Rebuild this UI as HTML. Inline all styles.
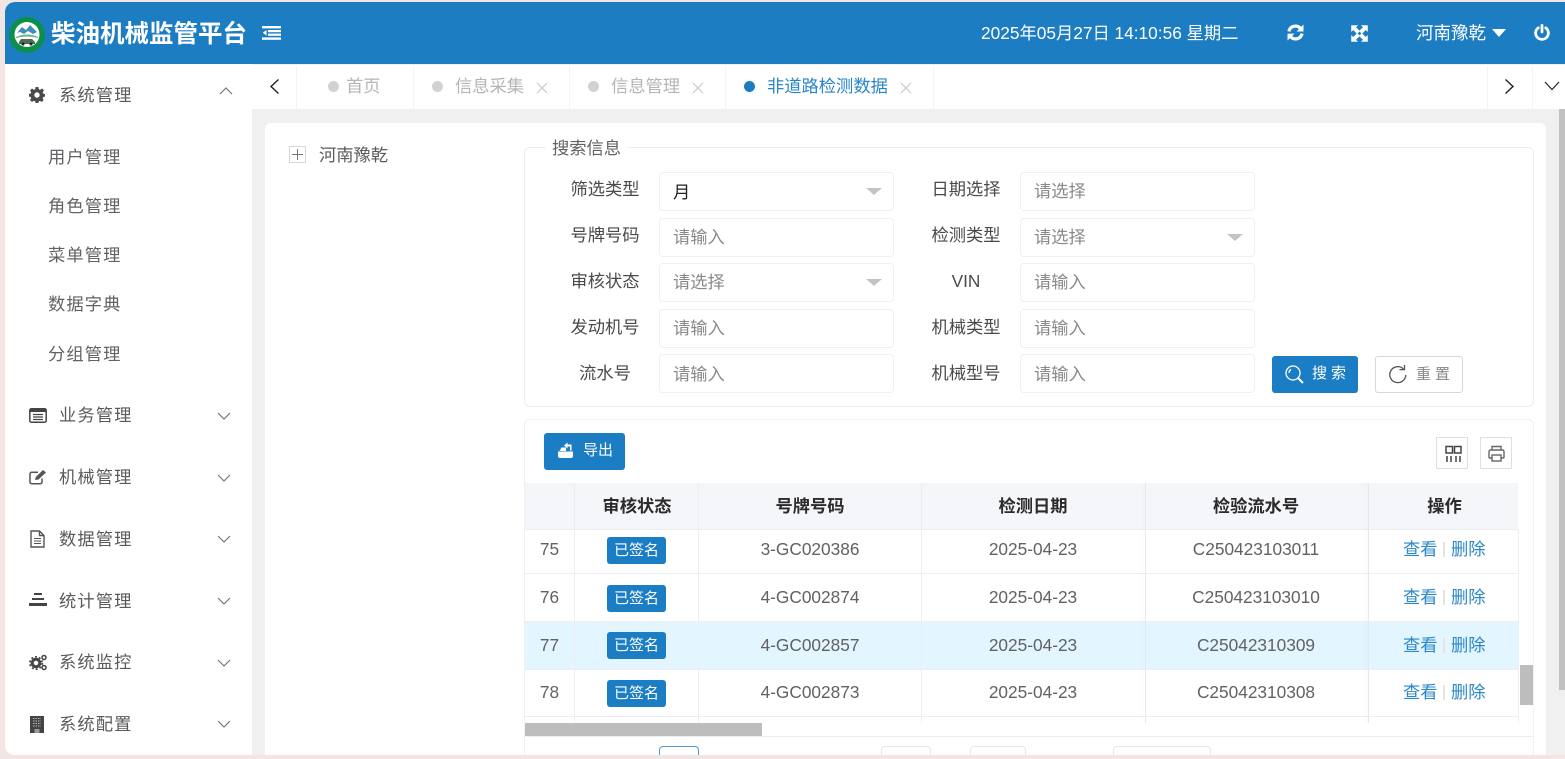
<!DOCTYPE html>
<html lang="zh"><head><meta charset="utf-8"><title>柴油机械监管平台</title>
<style>
*{box-sizing:border-box}
html,body{margin:0;padding:0;width:1565px;height:759px;overflow:hidden;background:#f3e5e3;font-family:"Liberation Sans","Noto Sans CJK SC",sans-serif;color:#606266}
.a{position:absolute}
.t{position:absolute;white-space:nowrap;line-height:20px}
#win{position:absolute;left:5px;top:2px;width:1560px;height:753px;background:#f0f0f0;border-radius:10px 0 0 10px;overflow:hidden}
#page{position:absolute;left:0;top:0;width:1565px;height:759px;overflow:hidden}
.menu{position:absolute;left:59px;font-size:17.28px;letter-spacing:1.1px;color:#5a5a5a;white-space:nowrap;line-height:20px}
.sub{position:absolute;left:48px;font-size:17.28px;letter-spacing:1.1px;color:#606266;white-space:nowrap;line-height:20px}
.lab{position:absolute;margin-top:-1px;font-size:17.28px;color:#4a4a4a;text-align:center;width:90px;line-height:20px;white-space:nowrap}
.inp{position:absolute;width:235px;height:39px;border:1px solid #edf0f5;border-radius:4px;background:#fff;font-size:17.28px;color:#8a8a8a;padding-left:13px;line-height:36px}
.caret{position:absolute;right:11px;top:15px;width:0;height:0;border-left:8px solid transparent;border-right:8px solid transparent;border-top:7px solid #c4c4c4}
.c{position:absolute;text-align:center;font-size:17.28px;color:#606266;white-space:nowrap}
.tag{position:absolute;left:607px;width:59px;height:27px;background:#1b7dc4;border-radius:3px;color:#fff;font-size:15px;text-align:center;line-height:27px}
.v{position:absolute;background:#eceef4;width:1px}
.h{position:absolute;background:#eceef4;height:1px}
.lnk{position:absolute;font-size:17.28px;color:#2a88c9;white-space:nowrap;line-height:20px}
.dot{position:absolute;width:11px;height:11px;border-radius:50%;background:#d2d2d2}
.tab{position:absolute;font-size:17.28px;color:#b5b5b5;white-space:nowrap;line-height:20px}
.ticon{position:absolute;width:1px;background:#f3f4f7;top:66px;height:43px}
</style></head><body>
<div id="win"></div>
<div id="page">
<!-- header -->
<div class="a" style="left:5px;top:2px;width:1560px;height:62px;background:#1c7dc3;border-radius:10px 0 0 0"></div>
<svg class="a" style="left:9px;top:17px" width="36" height="36" viewBox="0 0 36 36">
<circle cx="18" cy="18" r="18" fill="#0c8f4b"/><circle cx="18" cy="17.5" r="12.5" fill="#fff"/>
<path d="M8 16 L13 10 L17 13 L21 8 L28 15 L24 17 L19 14 L15 17 L11 15Z" fill="#3f8fb8"/>
<path d="M7 20 Q18 15 29 20 L29 21 Q18 18 7 21Z" fill="#69b48a"/>
<path d="M10 25 L12 22 H23 L26 25 V27 H10Z" fill="#4f6b55"/><circle cx="14" cy="27" r="1.5" fill="#222"/><circle cx="22" cy="27" r="1.5" fill="#222"/>
</svg>
<div class="t" style="left:51px;top:18px;font-size:24.5px;font-weight:700;color:#fff;line-height:34px">柴油机械监管平台</div>
<svg class="a" style="left:262px;top:26px" width="19" height="14" viewBox="0 0 19 14" fill="#fff"><rect x="0" y="0" width="19" height="2.4"/><rect x="6" y="4" width="13" height="2.2"/><rect x="6" y="7.6" width="13" height="2.2"/><rect x="0" y="11.4" width="19" height="2.4"/><path d="M4.5 4 L0.8 6.8 L4.5 9.6Z"/></svg>
<div class="t" style="left:981px;top:23px;font-size:17.3px;color:#fff">2025年05月27日 14:10:56 星期二</div>
<svg class="a" style="left:1287px;top:24px" width="17" height="17" viewBox="0 0 16 16" fill="none" stroke="#fff" stroke-width="3"><path d="M1.8 7 A6.3 6.3 0 0 1 12.6 4"/><path d="M14.2 9 A6.3 6.3 0 0 1 3.4 12"/><path d="M15.5 .5 V7 H9Z" fill="#fff" stroke="none"/><path d="M.5 15.5 V9 H7Z" fill="#fff" stroke="none"/></svg>
<svg class="a" style="left:1351px;top:25px" width="17" height="17" viewBox="0 0 15 15" fill="#fff" stroke="#fff" stroke-width=".6"><path d="M.5 .5H5.5L4 2 7.5 5.4 5.4 7.5 2 4 .5 5.5Z"/><path d="M14.5 .5V5.5L13 4 9.6 7.5 7.5 5.4 11 2 9.5 .5Z"/><path d="M.5 14.5V9.5L2 11 5.4 7.5 7.5 9.6 4 13 5.5 14.5Z"/><path d="M14.5 14.5H9.5L11 13 7.5 9.6 9.6 7.5 13 11 14.5 9.5Z"/></svg>
<div class="t" style="left:1416px;top:23px;font-size:17.5px;color:#fff">河南豫乾</div>
<div class="a" style="left:1492px;top:29px;width:0;height:0;border-left:7.5px solid transparent;border-right:7.5px solid transparent;border-top:8px solid #fff"></div>
<svg class="a" style="left:1534px;top:24px" width="16" height="17" viewBox="0 0 15 16" fill="none" stroke="#fff" stroke-width="2.6" stroke-linecap="round"><path d="M4 3.6 A6 6 0 1 0 11 3.6"/><path d="M7.5 1.3 V7.5"/></svg>

<!-- sidebar -->
<div class="a" style="left:5px;top:64px;width:247px;height:691px;background:#fff;border-radius:0 0 0 10px"></div>
<svg class="a" style="left:29px;top:87px" width="16" height="16" viewBox="0 0 16 16"><path fill="#4a4a4a" fill-rule="evenodd" d="M6.6 0H9.4L9.8 2.2 11.2 2.8 13.1 1.5 15 3.4 13.7 5.3 14.3 6.7 16 7V9.6L14.3 10 13.7 11.4 14.6 13.2 12.8 15 11 13.9 9.8 14.4 9.4 16H6.6L6.2 14.4 4.8 13.8 3 15 1 13.1 2.2 11.3 1.7 10 0 9.6V6.9L1.7 6.5 2.2 5.2 1 3.4 3 1.5 4.8 2.7 6.2 2.2ZM8 5.3A2.7 2.7 0 1 0 8 10.7 2.7 2.7 0 1 0 8 5.3Z"/></svg>
<div class="menu" style="top:85px">系统管理</div>
<svg class="a" style="left:219px;top:86px" width="14" height="9" fill="none" stroke="#777" stroke-width="1.2"><path d="M1 8 L7 2 L13 8"/></svg>
<div class="sub" style="top:147px">用户管理</div>
<div class="sub" style="top:196px">角色管理</div>
<div class="sub" style="top:245px">菜单管理</div>
<div class="sub" style="top:294px">数据字典</div>
<div class="sub" style="top:344px">分组管理</div>

<svg class="a" style="left:29px;top:408px" width="18" height="15" viewBox="0 0 18 15"><rect x=".8" y=".8" width="16.4" height="13.4" rx="1.5" fill="#fff" stroke="#444" stroke-width="1.5"/><rect x="1" y="1" width="16" height="3" fill="#444"/><path d="M4 6.5H14M4 9H14M4 11.5H14" stroke="#444" stroke-width="1.2"/></svg>
<div class="menu" style="top:405px">业务管理</div>
<svg class="a" style="left:217px;top:412px" width="14" height="9" fill="none" stroke="#777" stroke-width="1.2"><path d="M1 1 L7 7 L13 1"/></svg>

<svg class="a" style="left:29px;top:469px" width="18" height="16" viewBox="0 0 18 16" fill="none"><path d="M13 9.5V13A1.7 1.7 0 0 1 11.3 14.7H2.7A1.7 1.7 0 0 1 1 13V5A1.7 1.7 0 0 1 2.7 3.3H9" stroke="#555" stroke-width="1.5"/><path d="M6 11 L6.8 8 L14 1 L17 3.5 L9.5 10.5Z" fill="#555"/></svg>
<div class="menu" style="top:467px">机械管理</div>
<svg class="a" style="left:217px;top:474px" width="14" height="9" fill="none" stroke="#777" stroke-width="1.2"><path d="M1 1 L7 7 L13 1"/></svg>

<svg class="a" style="left:30px;top:530px" width="15" height="18" viewBox="0 0 15 18" fill="none" stroke="#555" stroke-width="1.4"><path d="M1 1H9.5L14 5.5V17H1Z"/><path d="M9.5 1V5.5H14"/><path d="M4 8.5H11M4 11H11M4 13.5H11" stroke-width="1.1"/></svg>
<div class="menu" style="top:529px">数据管理</div>
<svg class="a" style="left:217px;top:535px" width="14" height="9" fill="none" stroke="#777" stroke-width="1.2"><path d="M1 1 L7 7 L13 1"/></svg>

<svg class="a" style="left:29px;top:593px" width="18" height="15" viewBox="0 0 18 15" fill="#444"><rect x="5" y="0" width="8" height="2"/><rect x="3" y="5" width="12" height="2"/><rect x="0" y="10" width="18" height="3"/></svg>
<div class="menu" style="top:591px">统计管理</div>
<svg class="a" style="left:217px;top:597px" width="14" height="9" fill="none" stroke="#777" stroke-width="1.2"><path d="M1 1 L7 7 L13 1"/></svg>

<svg class="a" style="left:29px;top:654px" width="19" height="17" viewBox="0 0 19 17" fill="none"><circle cx="7" cy="9" r="3.8" stroke="#444" stroke-width="3"/><circle cx="7" cy="9" r="6.2" stroke="#444" stroke-width="1.6" stroke-dasharray="2 2"/><circle cx="15" cy="3.5" r="2" stroke="#444" stroke-width="1.5"/><circle cx="15" cy="13.5" r="2" stroke="#444" stroke-width="1.5"/></svg>
<div class="menu" style="top:652px">系统监控</div>
<svg class="a" style="left:217px;top:659px" width="14" height="9" fill="none" stroke="#777" stroke-width="1.2"><path d="M1 1 L7 7 L13 1"/></svg>

<svg class="a" style="left:30px;top:716px" width="14" height="17" viewBox="0 0 14 17"><rect width="14" height="17" fill="#444"/><path d="M3 2.5H11M3 5H11M3 7.5H11M3 10H11" stroke="#bbb" stroke-width="1" stroke-dasharray="1.5 1"/><rect x="4.5" y="13" width="5" height="4" fill="#999"/></svg>
<div class="menu" style="top:714px">系统配置</div>
<svg class="a" style="left:217px;top:720px" width="14" height="9" fill="none" stroke="#777" stroke-width="1.2"><path d="M1 1 L7 7 L13 1"/></svg>

<!-- tabs -->
<div class="a" style="left:252px;top:65px;width:1313px;height:44px;background:#fff"></div>
<div class="ticon" style="left:296px"></div><div class="ticon" style="left:413px"></div><div class="ticon" style="left:569px"></div><div class="ticon" style="left:725px"></div><div class="ticon" style="left:933px"></div><div class="ticon" style="left:1487px"></div><div class="ticon" style="left:1532px"></div>
<svg class="a" style="left:269px;top:78px" width="11" height="17" fill="none" stroke="#222" stroke-width="1.4"><path d="M9.5 1.5 L2 8.5 L9.5 15.5"/></svg>
<svg class="a" style="left:1504px;top:78px" width="11" height="17" fill="none" stroke="#222" stroke-width="1.4"><path d="M1.5 1.5 L9 8.5 L1.5 15.5"/></svg>
<svg class="a" style="left:1544px;top:81px" width="16" height="10" fill="none" stroke="#222" stroke-width="1.2"><path d="M1 1 L8 8.5 L15 1"/></svg>
<div class="dot" style="left:328px;top:81px"></div><div class="tab" style="left:346px;top:76px">首页</div>
<div class="dot" style="left:432px;top:81px"></div><div class="tab" style="left:455px;top:76px">信息采集</div>
<svg class="a" style="left:536px;top:82px" width="12" height="12" stroke="#c6c6c6" stroke-width="1"><path d="M1 1L11 11M11 1L1 11"/></svg>
<div class="dot" style="left:588px;top:81px"></div><div class="tab" style="left:611px;top:76px">信息管理</div>
<svg class="a" style="left:692px;top:82px" width="12" height="12" stroke="#c6c6c6" stroke-width="1"><path d="M1 1L11 11M11 1L1 11"/></svg>
<div class="dot" style="left:744px;top:81px;background:#1b7dc4"></div><div class="tab" style="left:767px;top:76px;color:#2a85c8">非道路检测数据</div>
<svg class="a" style="left:900px;top:82px" width="12" height="12" stroke="#c6c6c6" stroke-width="1"><path d="M1 1L11 11M11 1L1 11"/></svg>

<!-- page scrollbar -->
<div class="a" style="left:1559px;top:109px;width:6px;height:581px;background:#c1c1c1"></div>

<!-- card -->
<div class="a" style="left:265px;top:123px;width:1281px;height:632px;background:#fff;border-radius:6px 6px 0 0"></div>
<svg class="a" style="left:289px;top:146px" width="17" height="17" fill="none"><rect x=".5" y=".5" width="16" height="16" stroke="#d4d8e0"/><path d="M3 8.5H14M8.5 3V14" stroke="#777" stroke-width="1"/></svg>
<div class="t" style="left:319px;top:145px;font-size:17.28px;color:#5a5a5a">河南豫乾</div>

<!-- search fieldset -->
<div class="a" style="left:524px;top:147px;width:1010px;height:260px;border:1px solid #ebedf2;border-radius:6px"></div>
<div class="t" style="left:546px;top:138px;font-size:17.28px;color:#606266;background:#fff;padding:0 6px;height:20px">搜索信息</div>

<div class="lab" style="left:560px;top:180px">筛选类型</div>
<div class="inp" style="left:659px;top:172px;color:#222;padding-top:1px">月<div class="caret"></div></div>
<div class="lab" style="left:921px;top:180px">日期选择</div>
<div class="inp" style="left:1020px;top:172px">请选择</div>

<div class="lab" style="left:560px;top:226px">号牌号码</div>
<div class="inp" style="left:659px;top:218px">请输入</div>
<div class="lab" style="left:921px;top:226px">检测类型</div>
<div class="inp" style="left:1020px;top:218px">请选择<div class="caret"></div></div>

<div class="lab" style="left:560px;top:272px">审核状态</div>
<div class="inp" style="left:659px;top:263px">请选择<div class="caret"></div></div>
<div class="lab" style="left:921px;top:272px">VIN</div>
<div class="inp" style="left:1020px;top:263px">请输入</div>

<div class="lab" style="left:560px;top:318px">发动机号</div>
<div class="inp" style="left:659px;top:309px">请输入</div>
<div class="lab" style="left:921px;top:318px">机械类型</div>
<div class="inp" style="left:1020px;top:309px">请输入</div>

<div class="lab" style="left:560px;top:364px">流水号</div>
<div class="inp" style="left:659px;top:354px;line-height:38px">请输入</div>
<div class="lab" style="left:921px;top:364px">机械型号</div>
<div class="inp" style="left:1020px;top:354px;line-height:38px">请输入</div>

<div class="a" style="left:1272px;top:356px;width:86px;height:37px;background:#1b7dc4;border-radius:3px"></div>
<svg class="a" style="left:1285px;top:365px" width="20" height="19" fill="none" stroke="#fff" stroke-width="1.3"><circle cx="8" cy="8" r="7"/><path d="M13 13L18 18" stroke-width="2"/><path d="M4 8A4 4 0 0 1 6 4.5"/></svg>
<div class="t" style="left:1312px;top:364px;font-size:15px;color:#fff;letter-spacing:4px">搜索</div>
<div class="a" style="left:1375px;top:356px;width:88px;height:37px;border:1px solid #d8d8d8;border-radius:3px;background:#fff"></div>
<svg class="a" style="left:1388px;top:365px" width="20" height="19" fill="none" stroke="#555" stroke-width="1.3"><path d="M15.5 4 A8 8 0 1 0 17.8 10"/><path d="M11.5 4.6H16.5V0" /></svg>
<div class="t" style="left:1416px;top:365px;font-size:15px;color:#888;letter-spacing:4px">重置</div>

<!-- table panel -->
<div class="a" style="left:524px;top:419px;width:1010px;height:340px;border:1px solid #f0f1f5;border-radius:6px"></div>
<div class="a" style="left:544px;top:433px;width:81px;height:37px;background:#1b7dc4;border-radius:3px"></div>
<svg class="a" style="left:557px;top:442px" width="17" height="17" viewBox="0 0 17 17" fill="#fff"><path d="M1 9.5H16V14A2 2 0 0 1 14 16H3A2 2 0 0 1 1 14Z"/><path d="M2.5 9L4.5 5.5H9V9Z"/><path d="M7 3.5L10.5 .5V2.5H14.5V8.5H13V4.5H10.5V6.5Z"/></svg>
<div class="t" style="left:583px;top:441px;font-size:15px;color:#fff">导出</div>
<div class="a" style="left:1436px;top:437px;width:32px;height:32px;border:1px solid #dcdfe6"></div>
<svg class="a" style="left:1445px;top:445px" width="17" height="18" fill="none" stroke="#444" stroke-width="1.5"><rect x="1" y="1.5" width="6.5" height="6.5"/><rect x="9.5" y="1.5" width="6.5" height="6.5"/><path d="M2 11V17M6 11V17M11 11V17M15 11V17"/></svg>
<div class="a" style="left:1480px;top:437px;width:32px;height:32px;border:1px solid #dcdfe6"></div>
<svg class="a" style="left:1488px;top:445px" width="17" height="17" fill="none" stroke="#666" stroke-width="1.4"><path d="M4 5V1.5H13V5"/><path d="M4 13H2A1 1 0 0 1 1 12V6.5A1.5 1.5 0 0 1 2.5 5H14.5A1.5 1.5 0 0 1 16 6.5V12A1 1 0 0 1 15 13H13"/><rect x="4" y="10" width="9" height="6"/></svg>

<!-- table header -->
<div class="a" style="left:525px;top:483px;width:993px;height:47px;background:#f5f6fa;border-bottom:1px solid #eceef4"></div>
<div class="a" style="left:525px;top:530px;width:994px;height:193px;background:#fff"></div>
<div class="c" style="left:575px;width:124px;top:496px;font-weight:700;color:#2b2b2b;line-height:20px">审核状态</div>
<div class="c" style="left:699px;width:222px;top:496px;font-weight:700;color:#2b2b2b;line-height:20px">号牌号码</div>
<div class="c" style="left:922px;width:222px;top:496px;font-weight:700;color:#2b2b2b;line-height:20px">检测日期</div>
<div class="c" style="left:1144px;width:224px;top:496px;font-weight:700;color:#2b2b2b;line-height:20px">检验流水号</div>
<div class="c" style="left:1369px;width:151px;top:496px;font-weight:700;color:#2b2b2b;line-height:20px">操作</div>

<!-- selected row -->
<div class="a" style="left:525px;top:621px;width:994px;height:48px;background:#e3f5fe"></div>

<!-- row lines -->
<div class="h" style="left:525px;top:573px;width:994px"></div>
<div class="h" style="left:525px;top:621px;width:994px"></div>
<div class="h" style="left:525px;top:669px;width:994px"></div>
<div class="h" style="left:525px;top:716px;width:994px"></div>
<div class="v" style="left:574px;top:483px;height:240px"></div>
<div class="v" style="left:698px;top:483px;height:240px"></div>
<div class="v" style="left:921px;top:483px;height:240px"></div>
<div class="v" style="left:1145px;top:483px;height:240px;background:#e6e8ee;box-shadow:-2px 0 3px rgba(0,0,0,.04)"></div>
<div class="v" style="left:1368px;top:483px;height:240px;background:#e6e8ee;box-shadow:-2px 0 3px rgba(0,0,0,.06)"></div>
<div class="v" style="left:1518px;top:530px;height:193px"></div>

<!-- rows -->
<div class="c" style="left:525px;width:49px;top:539px;line-height:20px">75</div><div class="tag" style="top:537px">已签名</div><div class="c" style="left:699px;width:222px;top:539px;line-height:20px">3-GC020386</div><div class="c" style="left:922px;width:222px;top:539px;line-height:20px">2025-04-23</div><div class="c" style="left:1144px;width:224px;top:539px;line-height:20px">C250423103011</div>
<div class="lnk" style="left:1403px;top:539px">查看</div><div class="a" style="left:1443px;top:542px;width:2px;height:15px;background:#e4e4e4"></div><div class="lnk" style="left:1451px;top:539px">删除</div>

<div class="c" style="left:525px;width:49px;top:587px;line-height:20px">76</div><div class="tag" style="top:585px">已签名</div><div class="c" style="left:699px;width:222px;top:587px;line-height:20px">4-GC002874</div><div class="c" style="left:922px;width:222px;top:587px;line-height:20px">2025-04-23</div><div class="c" style="left:1144px;width:224px;top:587px;line-height:20px">C250423103010</div>
<div class="lnk" style="left:1403px;top:587px">查看</div><div class="a" style="left:1443px;top:590px;width:2px;height:15px;background:#e4e4e4"></div><div class="lnk" style="left:1451px;top:587px">删除</div>

<div class="c" style="left:525px;width:49px;top:635px;line-height:20px">77</div><div class="tag" style="top:632px">已签名</div><div class="c" style="left:699px;width:222px;top:635px;line-height:20px">4-GC002857</div><div class="c" style="left:922px;width:222px;top:635px;line-height:20px">2025-04-23</div><div class="c" style="left:1144px;width:224px;top:635px;line-height:20px">C25042310309</div>
<div class="lnk" style="left:1403px;top:635px">查看</div><div class="a" style="left:1443px;top:638px;width:2px;height:15px;background:#e4e4e4"></div><div class="lnk" style="left:1451px;top:635px">删除</div>

<div class="c" style="left:525px;width:49px;top:682px;line-height:20px">78</div><div class="tag" style="top:680px">已签名</div><div class="c" style="left:699px;width:222px;top:682px;line-height:20px">4-GC002873</div><div class="c" style="left:922px;width:222px;top:682px;line-height:20px">2025-04-23</div><div class="c" style="left:1144px;width:224px;top:682px;line-height:20px">C25042310308</div>
<div class="lnk" style="left:1403px;top:682px">查看</div><div class="a" style="left:1443px;top:685px;width:2px;height:15px;background:#e4e4e4"></div><div class="lnk" style="left:1451px;top:682px">删除</div>

<!-- table scrollbars -->
<div class="a" style="left:1520px;top:665px;width:13px;height:40px;background:#bdbdbd"></div>
<div class="a" style="left:525px;top:723px;width:237px;height:13px;background:#bdbdbd"></div>
<div class="h" style="left:525px;top:736px;width:1008px"></div>

<!-- pagination (clipped) -->
<div class="a" style="left:659px;top:746px;width:40px;height:13px;border:1px solid #4a9bd6;border-bottom:0;border-radius:4px 4px 0 0;background:#fff"></div>
<div class="a" style="left:881px;top:746px;width:50px;height:13px;border:1px solid #e4e7ed;border-bottom:0;border-radius:4px 4px 0 0"></div>
<div class="a" style="left:970px;top:746px;width:56px;height:13px;border:1px solid #e4e7ed;border-bottom:0;border-radius:4px 4px 0 0"></div>
<div class="a" style="left:1113px;top:746px;width:98px;height:13px;border:1px solid #e4e7ed;border-bottom:0;border-radius:4px 4px 0 0"></div>

<!-- bottom strip -->
<div class="a" style="left:0;top:755px;width:1565px;height:4px;background:#f3e5e3"></div>
<div class="a" style="left:0;top:0;width:1565px;height:2px;background:#f3e5e3"></div>
</div>
</body></html>
